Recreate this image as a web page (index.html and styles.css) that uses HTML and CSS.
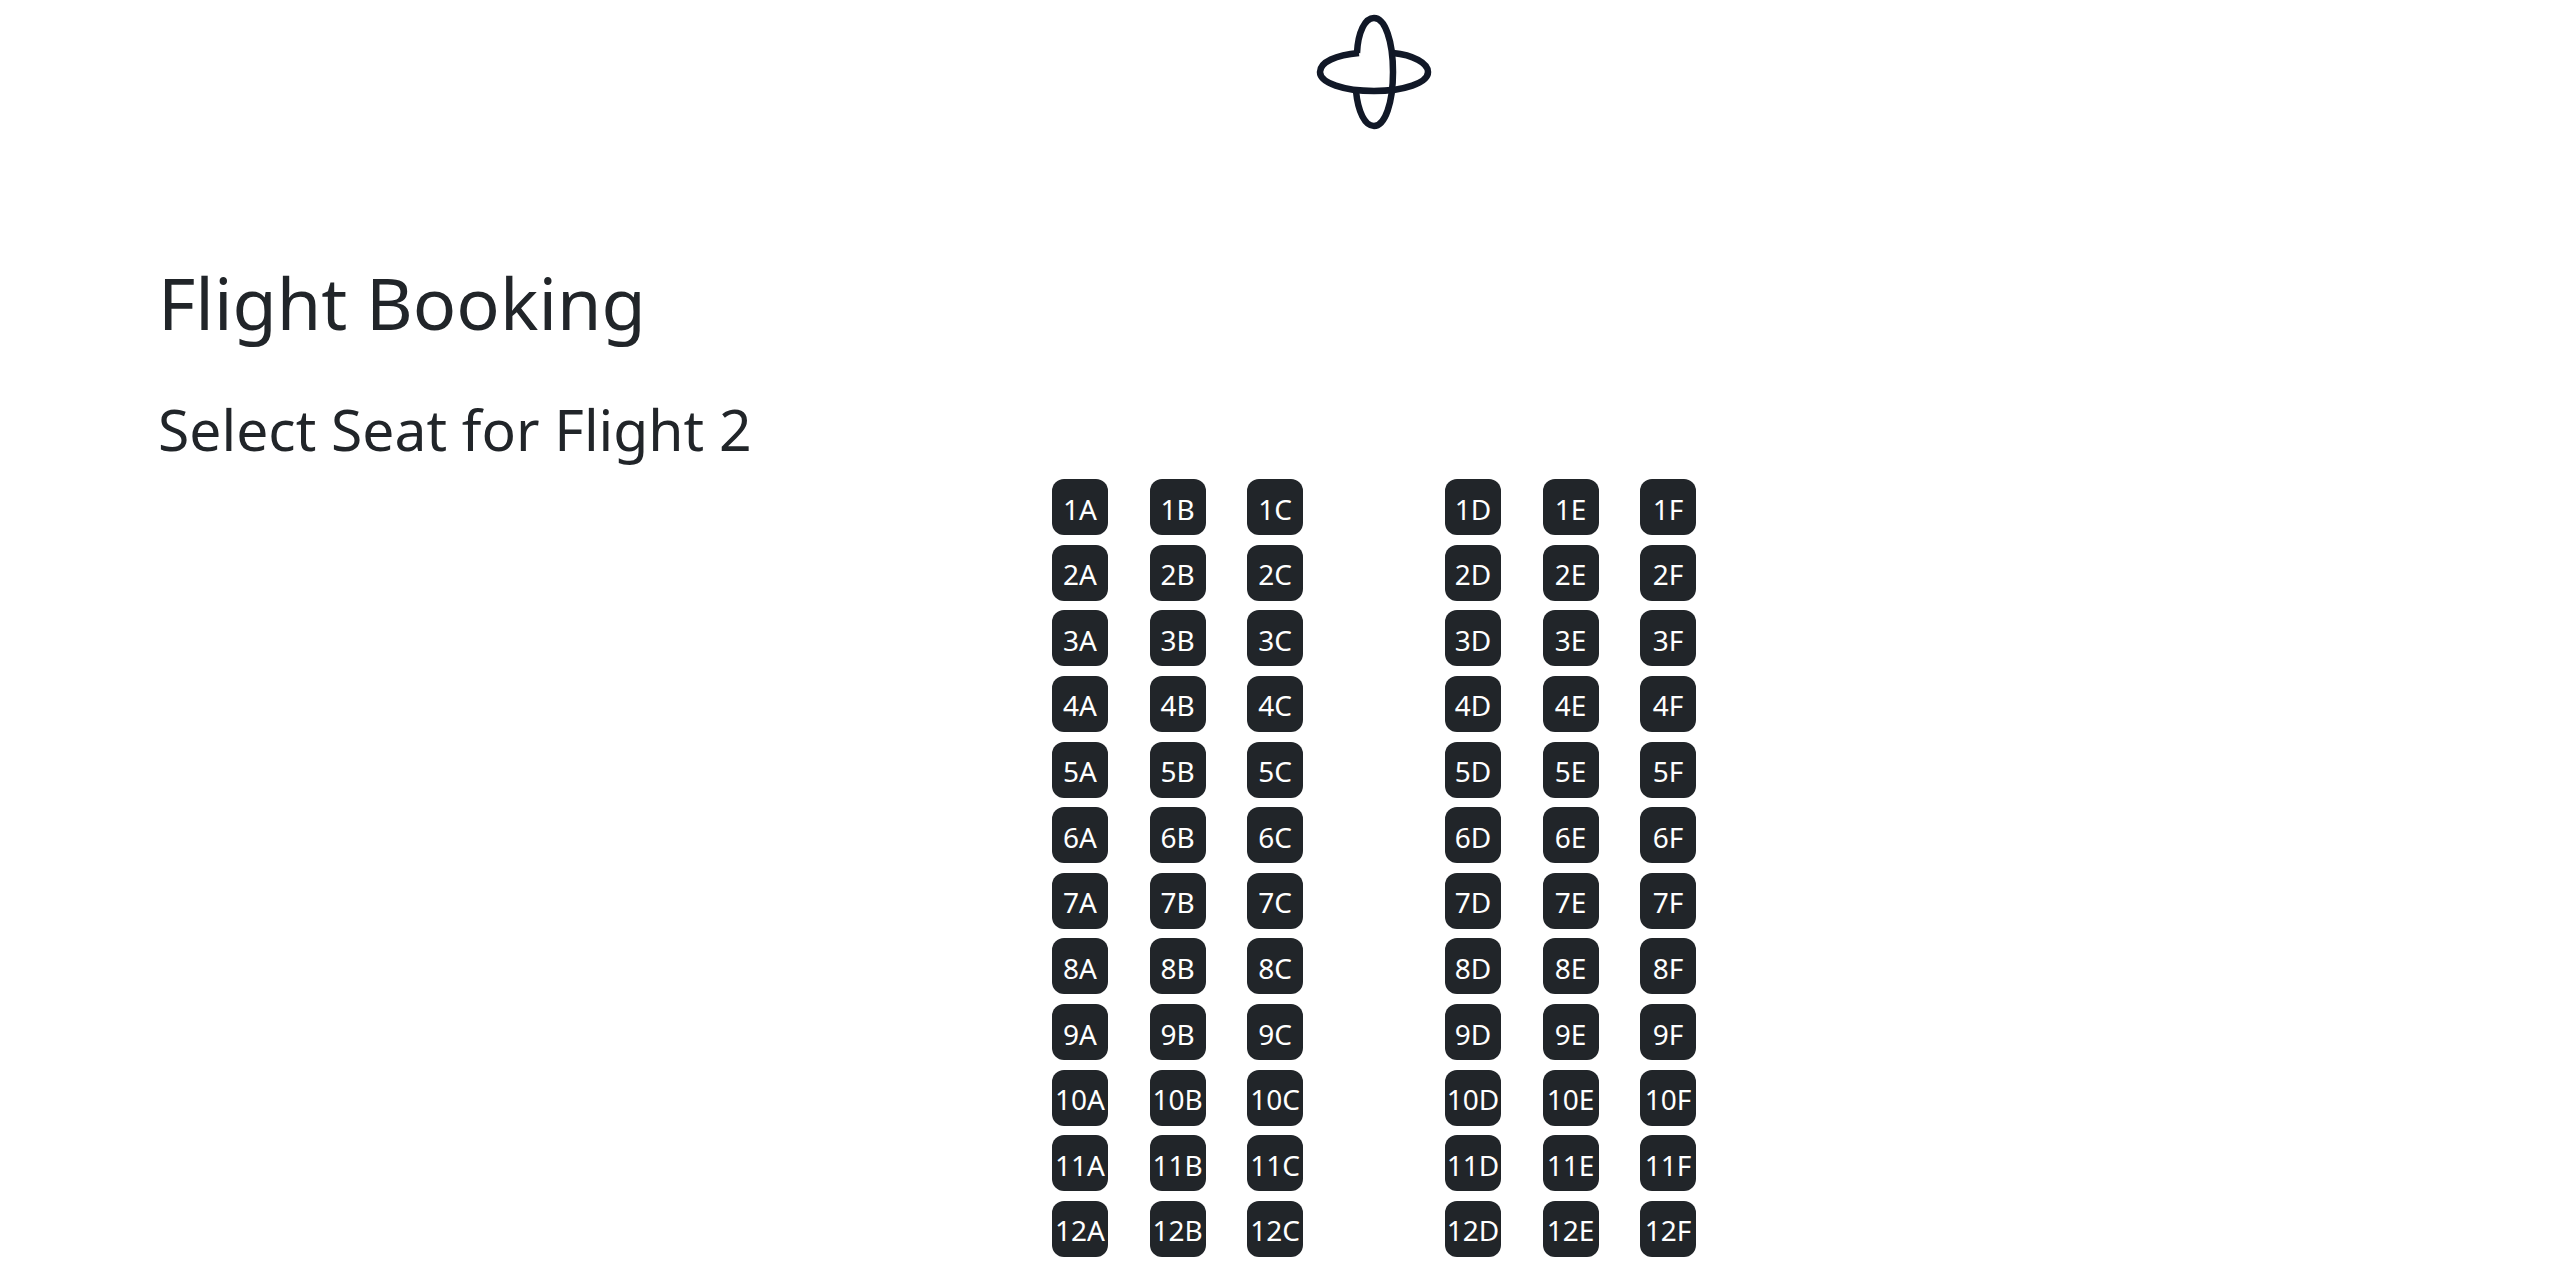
FILE: index.html
```
<!DOCTYPE html>
<html lang="en">
<head>
<meta charset="utf-8">
<title>Flight Booking</title>
<meta name="viewport" content="width=device-width, initial-scale=1">
<link rel="stylesheet" href="styles.css">
</head>
<body>
<header class="header">
<svg class="logo" viewBox="0 0 116 116" role="img" aria-label="Logo">
<path d="M41 39C42 18 49 4 58 4C69 4 77 27 77 58C77 89 69 112 58 112C49 112 42 98 40 77"/>
<path d="M43 39C20 41 4 48 4 58C4 69 28 77 58 77C88 77 112 69 112 58C112 49 97 41 77 39"/>
</svg>
</header>
<main class="booking">
<h1 class="title">Flight Booking</h1>
<h2 class="subtitle">Select Seat for Flight 2</h2>
<div class="seats" id="seats"></div>
</main>
<script src="seats.js"></script>
</body>
</html>
```
FILE: styles.css
```
* {
  box-sizing: border-box;
}

body {
  margin: 0;
  padding-left: 156px;
  background: #fff;
  color: #212529;
  font-family: "Noto Sans", sans-serif;
}

.header {
  display: flex;
  justify-content: center;
  padding: 14px 0 0 36px;
}

.logo {
  width: 116px;
  height: 116px;
  fill: none;
  stroke: #111827;
  stroke-width: 6.5;
}

.booking {
  padding-top: 128px;
}

.title,
.subtitle {
  margin: 0;
  padding-left: 2px;
  font-weight: 400;
}

.title {
  font-size: 72px;
  line-height: 88px;
}

.subtitle {
  margin-top: 48px;
  font-size: 57px;
  line-height: 70px;
}

.seats {
  display: flex;
  flex-direction: column;
  justify-content: space-between;
  height: 778px;
  margin-top: 15px;
  padding-left: 36px;
}

.row {
  display: flex;
  justify-content: center;
  gap: 142px;
}

.group {
  display: flex;
  justify-content: space-between;
  width: 251px;
}

.seat {
  display: flex;
  align-items: center;
  justify-content: center;
  width: 56px;
  height: 56px;
  padding: 3px 0 0;
  border: 0;
  border-radius: 12px;
  background: #212529;
  color: #fff;
  font-family: inherit;
  font-size: 28px;
  font-weight: 400;
  line-height: 40px;
  white-space: nowrap;
}
```
FILE: seats.js
```
const seats = document.getElementById("seats");

for (let number = 1; number <= 12; number++) {
  const row = document.createElement("div");
  row.className = "row";
  for (const letters of ["ABC", "DEF"]) {
    const group = document.createElement("div");
    group.className = "group";
    for (const letter of letters) {
      const seat = document.createElement("button");
      seat.type = "button";
      seat.className = "seat";
      seat.textContent = number + letter;
      group.append(seat);
    }
    row.append(group);
  }
  seats.append(row);
}
```
